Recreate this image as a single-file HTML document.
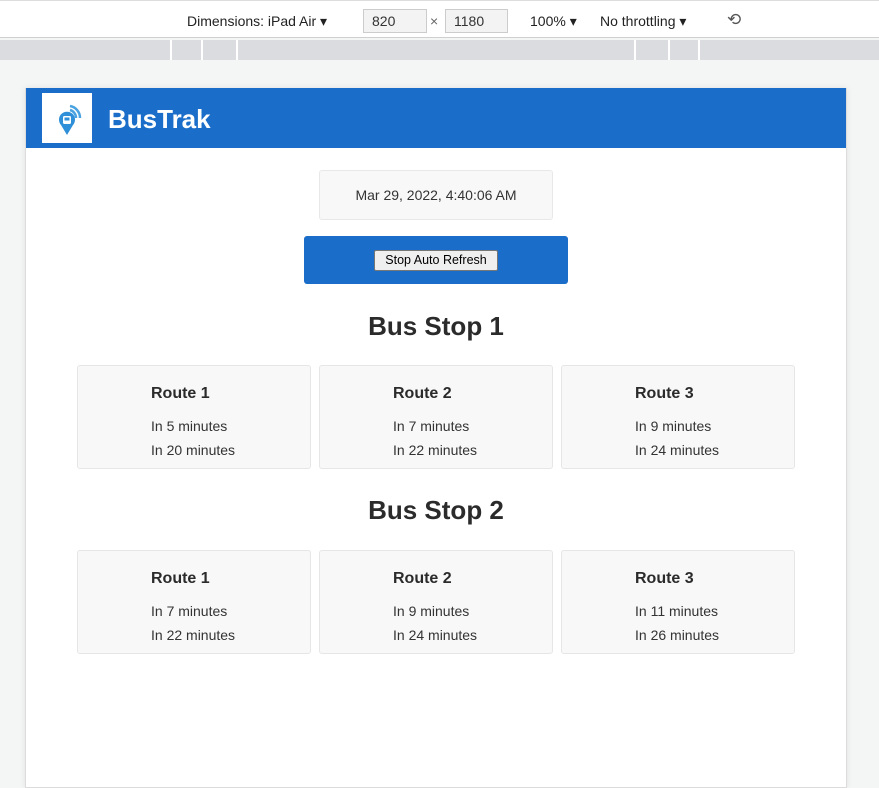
<!DOCTYPE html>
<html><head><style>
*{box-sizing:border-box;margin:0;padding:0}
body{width:879px;height:763px;overflow:hidden;background:#f4f5f5;font-family:"Liberation Sans",sans-serif;position:relative;color:#2b2b2b}
.abs{position:absolute}
.tb{left:0;top:0;width:879px;height:38px;background:#fff;border-bottom:1px solid #cfcfcf;border-top:1px solid #ddd}
.tb span{position:absolute;top:12px;font-size:14px;color:#222}
.inp{position:absolute;top:8px;height:24px;border:1px solid #ccc;background:#f3f3f3;font-size:14px;padding:3px 0 0 8px;color:#333}
.band{left:0;top:40px;width:879px;height:20px;background:#dadce0}
.band i{position:absolute;top:0;width:2px;height:20px;background:#fff}
.page{left:25px;top:88px;width:822px;height:700px;background:#fff;border:1px solid #dcdcdc;box-shadow:0 0 6px rgba(0,0,0,.08)}
.hdr{left:26px;top:88px;width:820px;height:60px;background:#1a6dc8}
.logo{left:42px;top:93px;width:50px;height:50px;background:#fff}
.title{left:108px;top:104px;color:#fff;font-size:26px;font-weight:bold}
.date{left:319px;top:170px;width:234px;height:50px;background:#f8f8f8;border:1px solid #e8e8e8;border-radius:3px;font-size:14px;text-align:center;line-height:48px;color:#333}
.btnwrap{left:304px;top:236px;width:264px;height:48px;background:#1a6dc8;border-radius:3px}
.btn{left:374px;top:250px;width:124px;height:21px;background:#efefef;border:1px solid #767676;border-radius:2px;font-size:12.5px;text-align:center;line-height:19px;color:#000}
h2{position:absolute;left:26px;width:820px;text-align:center;font-size:26px;font-weight:bold;color:#2b2b2b}
.card{position:absolute;width:234px;height:104px;background:#f8f8f8;border:1px solid #e6e6e6;border-radius:3px}
.card b{position:absolute;left:73px;top:19px;font-size:16px}
.card p{position:absolute;left:73px;font-size:14px;color:#333}
</style></head><body>
<div class="abs tb">
<span style="left:187px">Dimensions: iPad Air ▾</span>
<div class="inp" style="left:363px;width:64px">820</div>
<span style="left:430px;color:#666">×</span>
<div class="inp" style="left:445px;width:63px">1180</div>
<span style="left:530px">100% ▾</span>
<span style="left:600px">No throttling ▾</span>
<span style="left:727px;font-size:17px;top:9px;color:#555">⟲</span>
</div>
<div class="abs band"><i style="left:170px"></i><i style="left:201px"></i><i style="left:236px"></i><i style="left:634px"></i><i style="left:668px"></i><i style="left:698px"></i></div>
<div class="abs page"></div>
<div class="abs hdr"></div>
<div class="abs logo"><svg width="50" height="50" viewBox="0 0 50 50">
<path d="M28 13a12 12 0 0 1 10 12M28 17a8 8 0 0 1 6 8M28 21a4 4 0 0 1 3 4" stroke="#4aa3e0" stroke-width="2.5" fill="none"/>
<path d="M25 42l-6-10a8 8 0 1 1 12 0z" fill="#2f8fd8"/>
<rect x="21" y="23" width="8" height="8" rx="1.5" fill="#fff"/><rect x="22.5" y="24.5" width="5" height="3" fill="#2f8fd8"/>
</svg></div>
<div class="abs title">BusTrak</div>
<div class="abs date">Mar 29, 2022, 4:40:06 AM</div>
<div class="abs btnwrap"></div>
<div class="abs btn">Stop Auto Refresh</div>
<h2 style="top:311px">Bus Stop 1</h2>
<div class="card" style="left:77px;top:365px"><b>Route 1</b><p style="top:52px">In 5 minutes</p><p style="top:76px">In 20 minutes</p></div>
<div class="card" style="left:319px;top:365px"><b>Route 2</b><p style="top:52px">In 7 minutes</p><p style="top:76px">In 22 minutes</p></div>
<div class="card" style="left:561px;top:365px"><b>Route 3</b><p style="top:52px">In 9 minutes</p><p style="top:76px">In 24 minutes</p></div>
<h2 style="top:495px">Bus Stop 2</h2>
<div class="card" style="left:77px;top:550px"><b>Route 1</b><p style="top:52px">In 7 minutes</p><p style="top:76px">In 22 minutes</p></div>
<div class="card" style="left:319px;top:550px"><b>Route 2</b><p style="top:52px">In 9 minutes</p><p style="top:76px">In 24 minutes</p></div>
<div class="card" style="left:561px;top:550px"><b>Route 3</b><p style="top:52px">In 11 minutes</p><p style="top:76px">In 26 minutes</p></div>
</body></html>
